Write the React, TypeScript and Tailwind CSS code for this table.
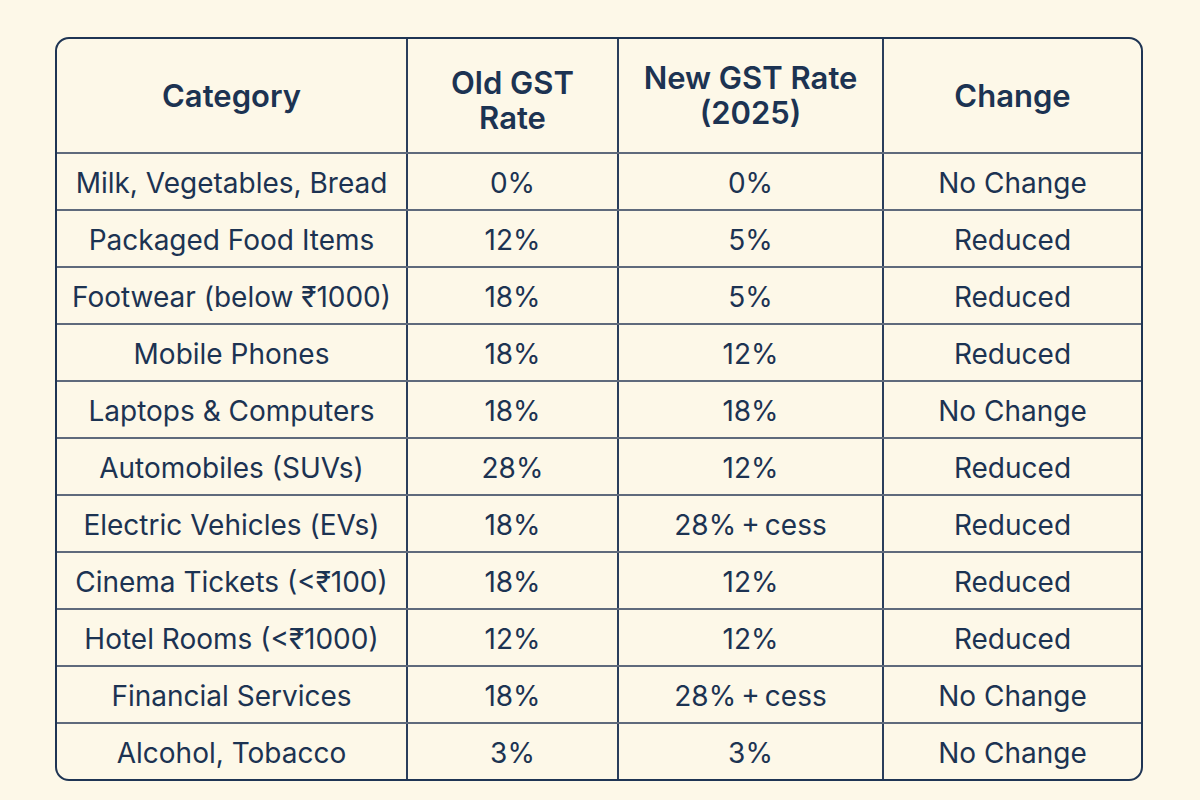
import React from "react";

const rows: [string, string, string, string][] = [
  ["Milk, Vegetables, Bread", "0%", "0%", "No Change"],
  ["Packaged Food Items", "12%", "5%", "Reduced"],
  ["Footwear (below ₹1000)", "18%", "5%", "Reduced"],
  ["Mobile Phones", "18%", "12%", "Reduced"],
  ["Laptops & Computers", "18%", "18%", "No Change"],
  ["Automobiles (SUVs)", "28%", "12%", "Reduced"],
  ["Electric Vehicles (EVs)", "18%", "28%\u2009+\u2009cess", "Reduced"],
  ["Cinema Tickets (<₹100)", "18%", "12%", "Reduced"],
  ["Hotel Rooms (<₹1000)", "12%", "12%", "Reduced"],
  ["Financial Services", "18%", "28%\u2009+\u2009cess", "No Change"],
  ["Alcohol, Tobacco", "3%", "3%", "No Change"],
];

const colCls = "grid grid-cols-[349px_211px_265px_1fr]";

export default function App() {
  return (
    <div
      className="w-[1200px] h-[800px] bg-[#fdf8e8] pt-[37px] pl-[55px] text-[#1c3352]"
      style={{ fontFamily: "Inter, 'Noto Sans', sans-serif" }}
    >
      <div className="w-[1088px] border-2 border-[#1f3554] rounded-[14px] overflow-hidden">
        <div className={`${colCls} h-[113px] text-[31px] font-semibold leading-[35px]`}>
          <div className="flex items-center justify-center text-center">Category</div>
          <div className="flex items-center justify-center text-center border-l-2 border-[#2a3e5c] pt-[8px]">
            Old GST
            <br />
            Rate
          </div>
          <div className="flex items-center justify-center text-center border-l-2 border-[#2a3e5c] pb-[2px]">
            New GST Rate
            <br />
            (2025)
          </div>
          <div className="flex items-center justify-center text-center border-l-2 border-[#2a3e5c]">Change</div>
        </div>
        {rows.map((r, i) => (
          <div
            key={i}
            className={`${colCls} h-[57px] border-t-2 border-[#5f6a7c] text-[28px] font-normal`}
          >
            <div className="flex items-center justify-center whitespace-nowrap pt-[3px]">{r[0]}</div>
            <div className="flex items-center justify-center border-l-2 border-[#2a3e5c] pt-[3px]">{r[1]}</div>
            <div className="flex items-center justify-center border-l-2 border-[#2a3e5c] pt-[3px]">{r[2]}</div>
            <div className="flex items-center justify-center border-l-2 border-[#2a3e5c] pt-[3px]">{r[3]}</div>
          </div>
        ))}
      </div>
    </div>
  );
}
